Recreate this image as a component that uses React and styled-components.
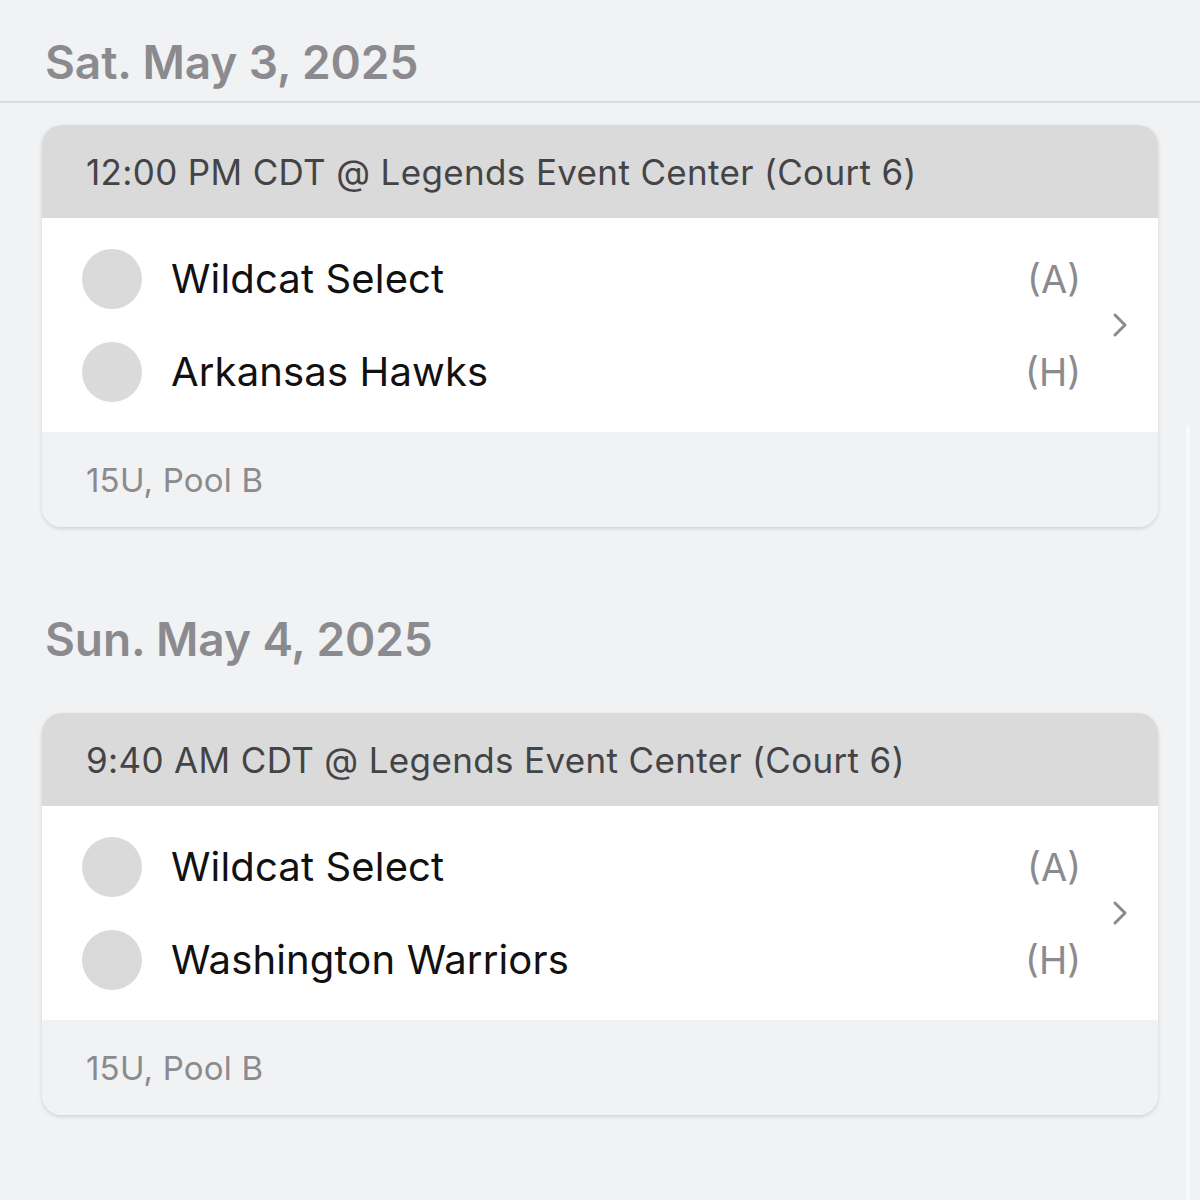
import React from 'react';
import styled, { createGlobalStyle } from 'styled-components';

const GlobalStyle = createGlobalStyle`
  html, body {
    margin: 0;
    padding: 0;
    background: #f1f2f4;
    font-family: Inter, "Noto Sans", sans-serif;
  }
`;

const days = [
  {
    label: 'Sat. May 3, 2025',
    divider: true,
    games: [
      {
        id: 1,
        when: '12:00 PM CDT @ Legends Event Center (Court 6)',
        teams: [
          { name: 'Wildcat Select', side: '(A)' },
          { name: 'Arkansas Hawks', side: '(H)' },
        ],
        pool: '15U, Pool B',
      },
    ],
  },
  {
    label: 'Sun. May 4, 2025',
    divider: false,
    games: [
      {
        id: 2,
        when: '9:40 AM CDT @ Legends Event Center (Court 6)',
        teams: [
          { name: 'Wildcat Select', side: '(A)' },
          { name: 'Washington Warriors', side: '(H)' },
        ],
        pool: '15U, Pool B',
      },
    ],
  },
];

export default function App() {
  return (
    <Page>
      <GlobalStyle />
      {days.map((day) => (
        <Day key={day.label}>
          <DayTitle $divider={day.divider}>{day.label}</DayTitle>
          {day.games.map((game) => (
            <Card key={game.id}>
              <CardHead>{game.when}</CardHead>
              <CardBody>
                <Teams>
                  {game.teams.map((team) => (
                    <TeamRow key={team.name}>
                      <Logo />
                      <TeamName>{team.name}</TeamName>
                      <Side>{team.side}</Side>
                    </TeamRow>
                  ))}
                </Teams>
                <Chevron viewBox="0 0 16 26">
                  <path d="M3 3 L13 13 L3 23" />
                </Chevron>
              </CardBody>
              <CardFoot>{game.pool}</CardFoot>
            </Card>
          ))}
        </Day>
      ))}
      <ScrollBar />
    </Page>
  );
}

const Page = styled.div`
  position: relative;
  width: 1200px;
  min-height: 1200px;
  overflow: hidden;
  background: #f1f2f4;
`;

const Day = styled.section`
  display: flex;
  flex-direction: column;
  padding-bottom: 68px;
`;

const DayTitle = styled.h2`
  margin: 0;
  height: ${(p) => (p.$divider ? '103px' : '118px')};
  padding: ${(p) => (p.$divider ? '33px' : '15px')} 0 0 45px;
  box-sizing: border-box;
  font-size: 46px;
  font-weight: 600;
  line-height: 58px;
  letter-spacing: -0.1px;
  color: #8b8b8f;
  border-bottom: ${(p) => (p.$divider ? '2px solid #d9dadd' : 'none')};
  margin-bottom: ${(p) => (p.$divider ? '22px' : '0')};
`;

const Card = styled.div`
  margin: 0 42px;
  border-radius: 20px;
  overflow: hidden;
  background: #ffffff;
  box-shadow: 0 2px 4px rgba(0, 0, 0, 0.12), 0 0 1px rgba(0, 0, 0, 0.08);
`;

const CardHead = styled.div`
  height: 93px;
  display: flex;
  align-items: center;
  padding-left: 44px;
  background: #dadada;
  font-size: 35px;
  color: #444446;
  letter-spacing: 0.35px;
`;

const CardBody = styled.div`
  height: 214px;
  display: flex;
  align-items: center;
  background: #ffffff;
  padding: 0 30px 0 40px;
`;

const Teams = styled.div`
  flex: 1;
  display: flex;
  flex-direction: column;
  gap: 33px;
`;

const TeamRow = styled.div`
  display: flex;
  align-items: center;
  height: 60px;
`;

const Logo = styled.div`
  width: 60px;
  height: 60px;
  border-radius: 50%;
  background: #dadada;
  flex-shrink: 0;
`;

const TeamName = styled.span`
  flex: 1;
  margin-left: 29px;
  font-size: 40px;
  color: #111111;
  letter-spacing: 0.15px;
`;

const Side = styled.span`
  font-size: 38px;
  color: #8b8b8f;
`;

const Chevron = styled.svg`
  width: 16px;
  height: 26px;
  margin-left: 31px;
  fill: none;
  stroke: #8b8b8f;
  stroke-width: 3;
  stroke-linecap: round;
  stroke-linejoin: round;
`;

const CardFoot = styled.div`
  height: 95px;
  display: flex;
  align-items: center;
  padding-left: 44px;
  background: #f1f2f4;
  font-size: 33px;
  letter-spacing: 0.2px;
  color: #8b8b8f;
`;

const ScrollBar = styled.div`
  position: absolute;
  top: 425px;
  right: 10px;
  width: 4px;
  height: 800px;
  border-radius: 2px;
  background: #f8f9fa;
`;
